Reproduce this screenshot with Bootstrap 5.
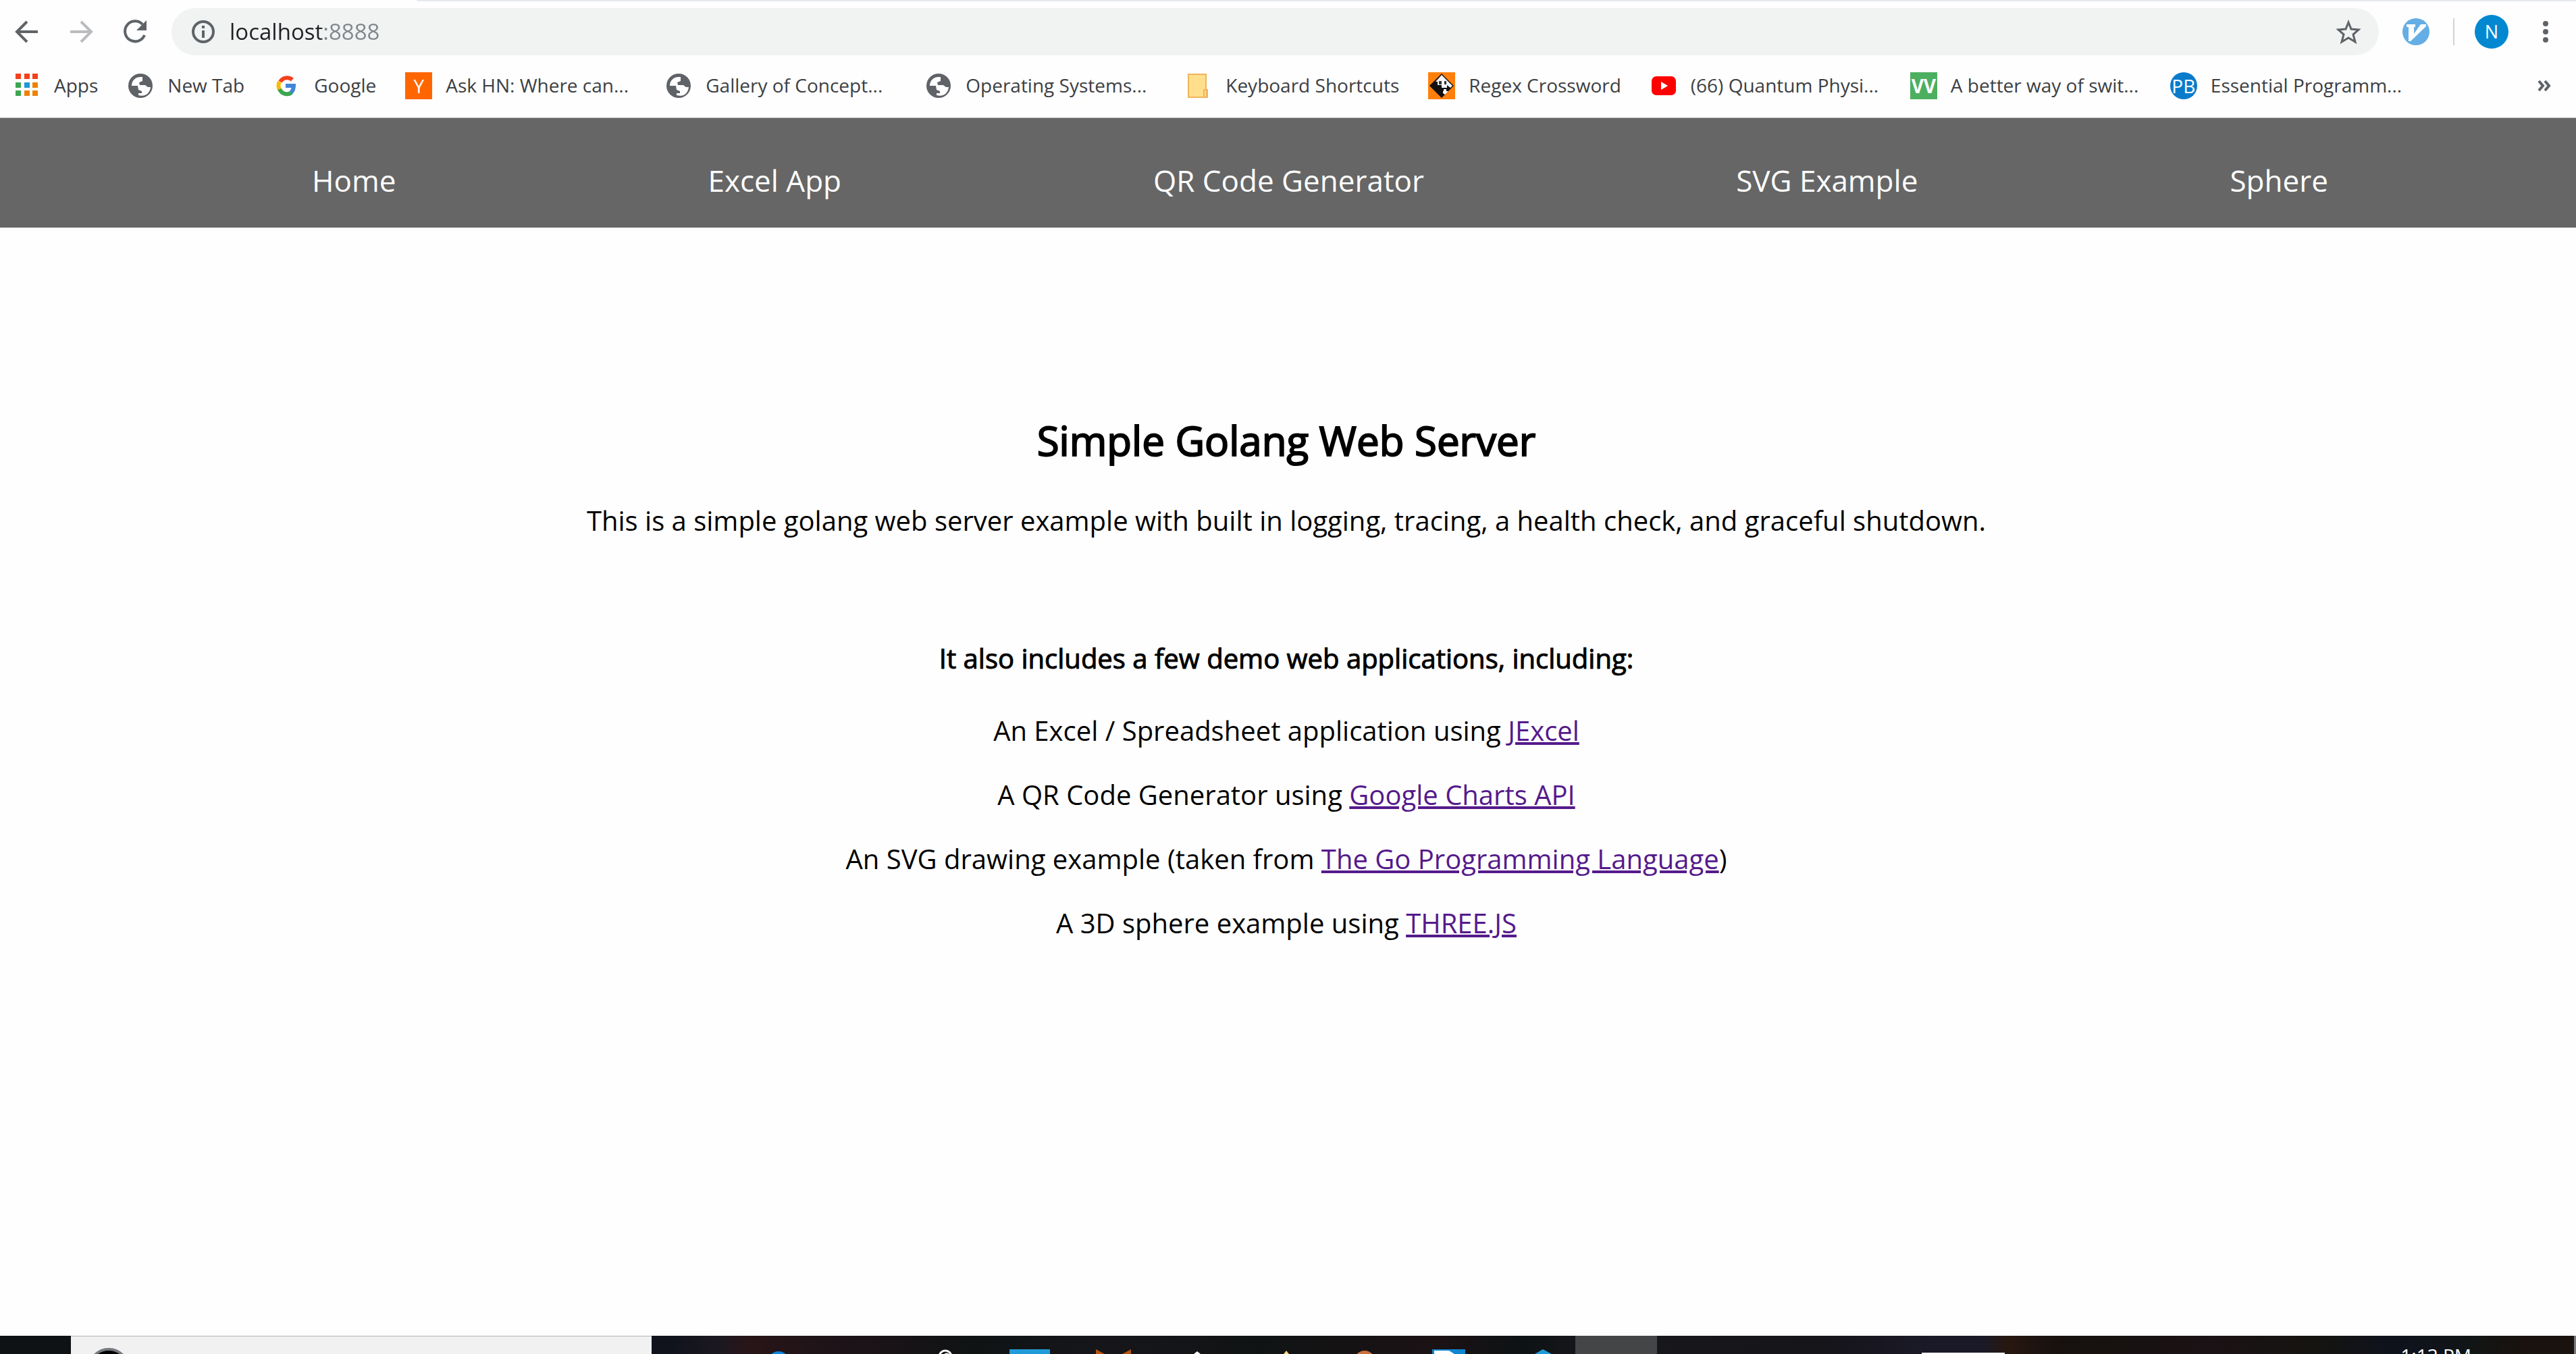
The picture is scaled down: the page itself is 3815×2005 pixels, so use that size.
<!DOCTYPE html>
<html lang="en">
<head>
<meta charset="utf-8">
<meta name="viewport" content="width=device-width, initial-scale=1">
<title>Simple Golang Web Server</title>
<link href="https://cdn.jsdelivr.net/npm/bootstrap@5.3.0/dist/css/bootstrap.min.css" rel="stylesheet">
<style>
  body { font-family: "Open Sans", "Noto Sans", sans-serif; background: #fefefe; color: #000; }
  .tab-edge { height: 2px; margin-left: 617px; background: #e6eaee; border-bottom-left-radius: 2px; }
  .toolbar { padding: 10px 25px 10px 16px; color: #5f6368; }
  .tool-btn { width: 48px; height: 48px; color: inherit; line-height: 1; }
  .tool-btn:disabled { color: #b9bbbe; opacity: 1; border-color: transparent; }
  .nav-tools { gap: 32px; margin-right: 30px; }
  .address { height: 70px; background: #f0f3f2; padding: 0 22px 0 29px; gap: 21px; }
  .address .url { font-size: 33px; line-height: 46px; color: transparent; -webkit-text-fill-color: transparent;
    background: linear-gradient(90deg, #202124 138px, #80868b 138px); -webkit-background-clip: text; background-clip: text; }
  .tool-end { gap: 35px; margin-left: 35px; }
  .divider { width: 2px; height: 40px; margin-right: -5px; background: #d0d3d6; }
  .avatar { width: 50px; height: 50px; background: #0288d1; font-size: 27px; line-height: 50px; }
  .bookmarks { height: 83px; padding: 15px 28px 0 20px; color: #3c4043; font-size: 28px; border-bottom: 1px solid #b0b2b2; }
  .bookmark { gap: 20px; margin-right: 43px; color: inherit; line-height: 38px; }
  .bookmark.fixed { width: 342px; }
  .fav { width: 40px; height: 40px; flex: none; line-height: 40px; text-align: center; color: #fff; }
  .fav-y { background: #ff6600; font-size: 28px; }
  .fav-vv { background: #4caf5f; font-size: 28px; font-weight: 700; }
  .fav-pb { background: #0a7bcb; font-size: 28px; }
  .site-nav { background: #666; height: 162px; padding: 61px 5px 0 0; }
  .site-nav .nav-item { margin-left: 100px; }
  .site-nav .nav-link { font-size: 44px; line-height: 62px; color: #fff; padding: 0; }
  .page { padding: 274px 5px 0 0; font-size: 40px; line-height: 55px; }
  .page p { margin-bottom: 40px; }
  .page a { color: #551a8b; }
  .heading, .subheading { font-weight: 400; }
  .heading { font-size: 60px; line-height: 82px; margin-bottom: 50px; -webkit-text-stroke: 2px #000; }
  .subheading { font-size: 40px; line-height: 55px; margin: 149px 0 52px; -webkit-text-stroke: 1px #000; }
  .taskbar { height: 27px; font-size: 28px; border-right: 3px solid #77787a; background: linear-gradient(90deg, #0e1214 0%, #0e1214 3%, #10131c 26%, #1c1820 28%, #281517 29%, #1c1318 33%, #0f1314 38%, #16161a 43%, #101314 49%, #1b1214 56%, #0d1214 59%, #18171c 62%, #16151a 71%, #1a1928 75%, #1a1928 77%, #28170f 78%, #16110f 80%, #1a1214 86%, #151411 90%, #0e121c 93%, #121516 96%, #19120e 98%, #19120e 100%); }
  .task-search { width: 860px; margin-left: 105px; background: #f1f1f1; border-top: 1px solid #b4b4b4; }
  .task-icons { height: 27px; width: 1368px; }
  .task-active { width: 121px; background: #444546; }
  .task-tray { width: 123px; height: 2px; margin-left: 392px; background: #fff; }
  .task-clock { line-height: 38px; margin: 10px 152px 0 0; color: #fff; }
</style>
</head>
<body class="d-flex flex-column vh-100 overflow-hidden">
<svg class="d-none" aria-hidden="true">
  <symbol id="globe" viewBox="0 0 40 40"><circle cx="20" cy="20" r="18" fill="#5f6368"/><path d="M23 7h-3C12 7 7 13 7 20h9l1 6 5 2v3h-5v3c10 3 17-3 18-12h-4l-4-3h-8l-1-4 5-2z" fill="#fff"/></symbol>
</svg>
<header>
  <div class="tab-edge"></div>
  <div class="toolbar d-flex align-items-center">
    <div class="nav-tools d-flex">
      <button class="tool-btn btn p-0 border-0" type="button" aria-label="Back"><svg width="40" height="40" viewBox="0 0 40 40" fill="none" stroke="currentColor" stroke-width="4"><path d="M36 20H6M20 5 5 20l15 15"/></svg></button>
      <button class="tool-btn btn p-0 border-0" type="button" aria-label="Forward" disabled><svg width="40" height="40" viewBox="0 0 40 40" fill="none" stroke="currentColor" stroke-width="4"><path d="M4 20h30M20 5l15 15-15 15"/></svg></button>
      <button class="tool-btn btn p-0 border-0" type="button" aria-label="Reload"><svg width="40" height="40" viewBox="0 0 40 40" fill="none" stroke="currentColor" stroke-width="4"><path d="M34 25a15 15 0 1 1-3-16"/><path d="M37 3v15H22z" fill="currentColor" stroke="none"/></svg></button>
    </div>
    <div class="address flex-grow-1 d-flex align-items-center rounded-pill">
      <svg class="flex-shrink-0" width="36" height="36" viewBox="0 0 36 36" fill="none" stroke="#5f6368" stroke-width="4"><circle cx="18" cy="18" r="15"/><path d="M18 16v11M18 9v4"/></svg>
      <input class="url form-control border-0 rounded-0 shadow-none p-0" type="text" aria-label="Address" value="localhost:8888">
      <button class="tool-btn btn p-0 border-0" type="button" aria-label="Bookmark this page"><svg width="38" height="38" viewBox="0 0 38 38" fill="none" stroke="#5f6368" stroke-width="3"><path d="m19 5 4 10 11 1-8 7 3 11-10-6-10 6 3-11-8-7 11-1z"/></svg></button>
    </div>
    <div class="tool-end d-flex align-items-center">
      <button class="btn p-0 border-0 d-flex" type="button" aria-label="Vim extension"><svg width="40" height="40" viewBox="0 0 40 40"><circle cx="20" cy="20" r="20" fill="#64aee5"/><path d="M6 9h13v4h-2v10L27 9h8v3L12 34H9V13H6z" fill="#fff"/></svg></button>
      <span class="divider"></span>
      <button class="avatar btn rounded-circle border-0 p-0 text-white" type="button">N</button>
      <button class="btn p-0 border-0 d-flex" type="button" aria-label="Menu"><svg width="40" height="40" viewBox="0 0 40 40" fill="#5f6368"><circle cx="20" cy="8" r="4"/><circle cx="20" cy="20" r="4"/><circle cx="20" cy="32" r="4"/></svg></button>
    </div>
  </div>
  <nav class="bookmarks d-flex align-items-start" aria-label="Bookmarks">
    <a class="bookmark d-flex text-decoration-none text-nowrap" href="#"><svg class="fav" viewBox="0 0 40 40"><path d="M3 2h8v8H3zm13 0h8v8h-8zm12 0h8v8h-8z" fill="#f4401c"/><path d="M3 15h8v8H3zm0 12h8v8H3z" fill="#3da651"/><path d="M16 15h8v8h-8z" fill="#1f96d6"/><path d="M28 15h8v8h-8zM16 27h8v8h-8zm12 0h8v8h-8z" fill="#ee8208"/></svg><span>Apps</span></a>
    <a class="bookmark d-flex text-decoration-none text-nowrap" href="#"><svg class="fav"><use href="#globe"/></svg><span>New Tab</span></a>
    <a class="bookmark d-flex text-decoration-none text-nowrap" href="#"><svg class="fav" viewBox="0 0 40 40" fill="none" stroke-width="6"><path d="M28 11a12 12 0 0 0-18 3" stroke="#f4401c"/><path d="M9 14a13 13 0 0 0 0 12" stroke="#fbbc05"/><path d="M9 25a12 12 0 0 0 18 5" stroke="#3da651"/><path d="M18 20h12c0 4-1 7-4 10" stroke="#4186d8"/></svg><span>Google</span></a>
    <a class="bookmark fixed d-flex text-decoration-none text-nowrap" href="#"><span class="fav fav-y">Y</span><span>Ask HN: Where can...</span></a>
    <a class="bookmark fixed d-flex text-decoration-none text-nowrap" href="#"><svg class="fav"><use href="#globe"/></svg><span>Gallery of Concept...</span></a>
    <a class="bookmark fixed d-flex text-decoration-none text-nowrap" href="#"><svg class="fav"><use href="#globe"/></svg><span>Operating Systems...</span></a>
    <a class="bookmark d-flex text-decoration-none text-nowrap" href="#"><svg class="fav" viewBox="0 0 40 40"><path d="M5 3h26v23h2v11H5z" fill="#ffdf8c" stroke="#f0b45c" stroke-width="2"/><path d="M28 36V26h4v10" fill="none" stroke="#f0b45c" stroke-width="2"/></svg><span>Keyboard Shortcuts</span></a>
    <a class="bookmark d-flex text-decoration-none text-nowrap" href="#"><svg class="fav" viewBox="0 0 40 40"><path d="M0 0h40v40H0z" fill="#ff7f0a"/><path d="m20 2 18 18-18 18L2 20z" fill="#111"/><path d="m20 4 16 16-3 3-5-4v4h-8v-4h-6v-5h-3z" fill="#f4f4f4"/><path d="M16 13h4v5h-4zm8 0h3v5h-3z" fill="#333"/><path d="M23 25h4v3h3l-5 5-3-2v-3h1z" fill="#fff"/></svg><span>Regex Crossword</span></a>
    <a class="bookmark fixed d-flex text-decoration-none text-nowrap" href="#"><svg class="fav" viewBox="0 0 40 40"><rect x="2" y="6" width="36" height="28" rx="7" fill="#f00"/><path d="m16 14 10 6-10 6z" fill="#fff"/></svg><span>(66) Quantum Physi...</span></a>
    <a class="bookmark fixed d-flex text-decoration-none text-nowrap" href="#"><span class="fav fav-vv">VV</span><span>A better way of swit...</span></a>
    <a class="bookmark fixed d-flex text-decoration-none text-nowrap" href="#"><span class="fav fav-pb rounded-circle">PB</span><span>Essential Programm...</span></a>
    <button class="btn p-0 border-0 ms-auto d-flex" type="button" aria-label="More bookmarks"><svg width="40" height="40" viewBox="0 0 40 40" fill="none" stroke="#5f6368" stroke-width="4"><path d="m13 13 6 7-6 7m9-14 6 7-6 7"/></svg></button>
  </nav>
</header>
<nav class="site-nav">
  <ul class="nav d-flex justify-content-evenly">
    <li class="nav-item"><a class="nav-link" href="#">Home</a></li>
    <li class="nav-item"><a class="nav-link" href="#">Excel App</a></li>
    <li class="nav-item"><a class="nav-link" href="#">QR Code Generator</a></li>
    <li class="nav-item"><a class="nav-link" href="#">SVG Example</a></li>
    <li class="nav-item"><a class="nav-link" href="#">Sphere</a></li>
  </ul>
</nav>
<main class="page flex-grow-1 text-center">
  <h1 class="heading">Simple Golang Web Server</h1>
  <p>This is a simple golang web server example with built in logging, tracing, a health check, and graceful shutdown.</p>
  <h2 class="subheading">It also includes a few demo web applications, including:</h2>
  <p>An Excel / Spreadsheet application using <a href="#">JExcel</a></p>
  <p>A QR Code Generator using <a href="#">Google Charts API</a></p>
  <p>An SVG drawing example (taken from <a href="#">The Go Programming Language</a>)</p>
  <p>A 3D sphere example using <a href="#">THREE.JS</a></p>
</main>
<footer class="taskbar d-flex overflow-hidden flex-shrink-0">
  <div class="task-search flex-shrink-0 overflow-hidden"><svg class="d-block" width="120" height="26" viewBox="0 0 120 26"><circle cx="56" cy="48" r="29" fill="#000" stroke="#75787d" stroke-width="4"/></svg></div>
  <svg class="task-icons flex-shrink-0" viewBox="965 0 1368 27">
    <circle cx="1153" cy="39" r="16" fill="#0b86d8"/>
    <g fill="none" stroke="#fff" stroke-width="3"><circle cx="1400" cy="31" r="9"/><circle cx="1402" cy="31" r="4"/></g>
    <path d="M1495 20h60v7h-60z" fill="#219bd8"/>
    <path d="M1623 20l13 7h-13zm52 0-13 7h13z" fill="#b8530d"/>
    <path d="m1773 23 5 4h-10z" fill="#fff"/>
    <path d="m1905 22 4 5h-8z" fill="#ffd877"/>
    <circle cx="2021" cy="38" r="16" fill="#c8703c"/>
    <path d="M2121 27v-7h49v7z" fill="#0e86d0"/><path d="M2124 27v-5h22l8 5z" fill="#fff"/>
    <path d="m2285 20 13 7h-25z" fill="#219bd8"/>
  </svg>
  <div class="task-active flex-shrink-0"></div>
  <div class="task-tray align-self-end"></div>
  <time class="task-clock text-nowrap ms-auto">1:13 PM</time>
</footer>
<script src="https://cdn.jsdelivr.net/npm/bootstrap@5.3.0/dist/js/bootstrap.bundle.min.js"></script>
</body>
</html>
